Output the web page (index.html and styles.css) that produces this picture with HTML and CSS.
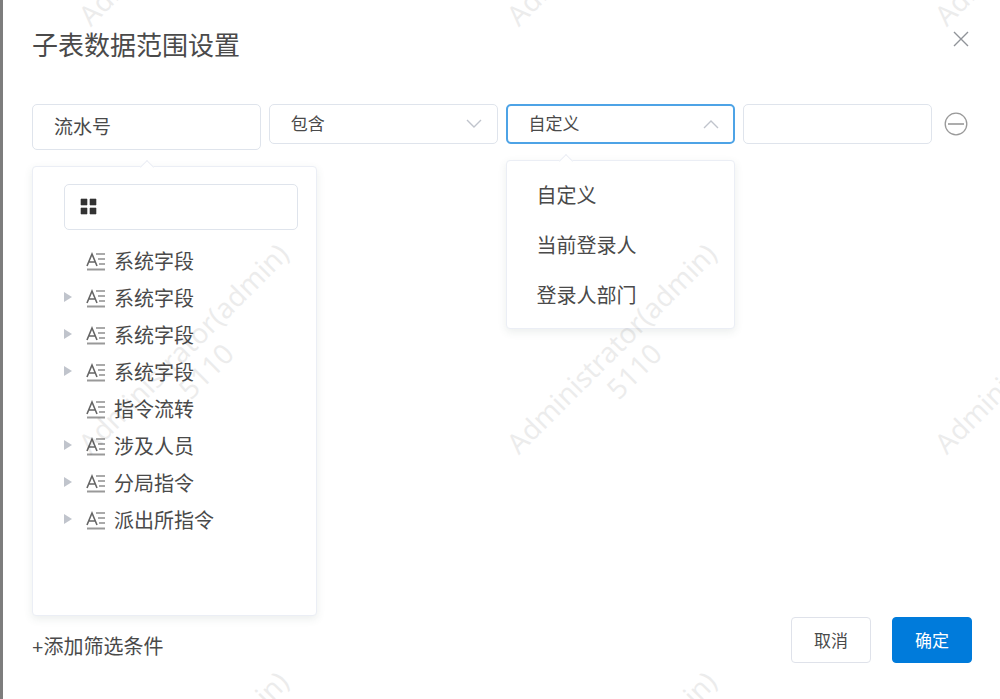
FILE: index.html
```html
<!DOCTYPE html>
<html lang="zh-CN">
<head>
<meta charset="utf-8">
<meta name="viewport" content="width=device-width, initial-scale=1">
<title>子表数据范围设置</title>
<link rel="stylesheet" href="styles.css">
</head>
<body>
<svg class="symbols" aria-hidden="true">
  <symbol id="field-icon" viewBox="0 0 20 20">
    <path d="M1 15 L6 3 L11 15 M3 11 H9" fill="none" stroke="#666" stroke-width="1.6"/>
    <path d="M10 3 H19 M12 8 H19 M13 13 H19" stroke="#aaa" stroke-width="2"/>
    <path d="M1 18.500 H19" stroke="#999" stroke-width="2"/>
  </symbol>
  <symbol id="caret-icon" viewBox="0 0 8 12"><path d="M0 0 L8 5 L0 10 Z" fill="#c0c4cc"/></symbol>
</svg>
<main class="dialog" role="dialog" aria-labelledby="dialog-title">
  <header class="dialog-header">
    <h1 class="dialog-title" id="dialog-title">子表数据范围设置</h1>
    <button class="icon-button" type="button" aria-label="关闭">
      <svg width="24" height="24" viewBox="0 0 24 24"><path d="M6 6 L20 20 M20 6 L6 20" stroke="#909399" stroke-width="1.4"/></svg>
    </button>
  </header>

  <div class="filter-row">
    <div class="field">
      <input class="control control-tall" type="text" value="流水号" aria-label="字段">
      <div class="popover tree-panel">
        <div class="search">
          <svg class="search-icon" width="16" height="16" viewBox="0 0 16 16" aria-hidden="true"><path d="M0 0h6v6H0zM9 0h6v6H9zM0 9h6v6H0zM9 9h6v6H9z" fill="#333" stroke="#333" stroke-width="0.6"/></svg>
          <input class="search-input" type="text" aria-label="搜索字段">
        </div>
        <ul class="tree">
          <li class="tree-item"><span class="caret"></span><svg class="tree-icon"><use href="#field-icon"/></svg><span>系统字段</span></li>
          <li class="tree-item"><button class="caret" type="button" aria-label="展开"><svg class="caret-icon"><use href="#caret-icon"/></svg></button><svg class="tree-icon"><use href="#field-icon"/></svg><span>系统字段</span></li>
          <li class="tree-item"><button class="caret" type="button" aria-label="展开"><svg class="caret-icon"><use href="#caret-icon"/></svg></button><svg class="tree-icon"><use href="#field-icon"/></svg><span>系统字段</span></li>
          <li class="tree-item"><button class="caret" type="button" aria-label="展开"><svg class="caret-icon"><use href="#caret-icon"/></svg></button><svg class="tree-icon"><use href="#field-icon"/></svg><span>系统字段</span></li>
          <li class="tree-item"><span class="caret"></span><svg class="tree-icon"><use href="#field-icon"/></svg><span>指令流转</span></li>
          <li class="tree-item"><button class="caret" type="button" aria-label="展开"><svg class="caret-icon"><use href="#caret-icon"/></svg></button><svg class="tree-icon"><use href="#field-icon"/></svg><span>涉及人员</span></li>
          <li class="tree-item"><button class="caret" type="button" aria-label="展开"><svg class="caret-icon"><use href="#caret-icon"/></svg></button><svg class="tree-icon"><use href="#field-icon"/></svg><span>分局指令</span></li>
          <li class="tree-item"><button class="caret" type="button" aria-label="展开"><svg class="caret-icon"><use href="#caret-icon"/></svg></button><svg class="tree-icon"><use href="#field-icon"/></svg><span>派出所指令</span></li>
        </ul>
      </div>
    </div>
    <div class="field">
      <select class="control" aria-label="条件"><option>包含</option></select>
      <svg class="chevron" width="16" height="10" viewBox="0 0 16 10" aria-hidden="true"><path d="M1 1 L8 8 L15 1" fill="none" stroke="#c0c4cc" stroke-width="1.4"/></svg>
    </div>
    <div class="field">
      <select class="control control-active" aria-label="取值方式"><option>自定义</option></select>
      <svg class="chevron" width="16" height="10" viewBox="0 0 16 10" aria-hidden="true"><path d="M1 9 L8 2 L15 9" fill="none" stroke="#c0c4cc" stroke-width="1.4"/></svg>
      <ul class="popover menu">
        <li><button class="menu-item" type="button">自定义</button></li>
        <li><button class="menu-item" type="button">当前登录人</button></li>
        <li><button class="menu-item" type="button">登录人部门</button></li>
      </ul>
    </div>
    <input class="control" type="text" aria-label="值">
    <button class="icon-button remove" type="button" aria-label="删除条件">
      <svg width="24" height="24" viewBox="0 0 24 24"><circle cx="12" cy="12" r="10.800" fill="none" stroke="#999" stroke-width="1.3"/><path d="M4 12 H20" stroke="#999" stroke-width="1.600"/></svg>
    </button>
  </div>

  <footer class="dialog-footer">
    <button class="add-button" type="button">+添加筛选条件</button>
    <div class="actions">
      <button class="button" type="button">取消</button>
      <button class="button button-primary" type="button">确定</button>
    </div>
  </footer>
</main>
<svg class="watermark" aria-hidden="true">
  <g id="mark-column">
    <g transform="translate(185 -78) rotate(-45)"><text y="8">Administrator(admin)</text><text y="40">5110</text></g>
    <g transform="translate(185 350) rotate(-45)"><text y="8">Administrator(admin)</text><text y="40">5110</text></g>
    <g transform="translate(185 778) rotate(-45)"><text y="8">Administrator(admin)</text><text y="40">5110</text></g>
  </g>
  <use href="#mark-column" x="428"/>
  <use href="#mark-column" x="856"/>
</svg>
</body>
</html>
```

FILE: styles.css
```css
* {
  box-sizing: border-box;
}

body {
  margin: 0;
  background: #fff;
  color: #4a4a4a;
  font-family: "Noto Sans", "Noto Sans CJK SC", sans-serif;
  font-size: 20px;
  font-weight: 400;
}

button,
input,
select {
  font: inherit;
  color: inherit;
}

button {
  padding: 0;
  border: 0;
  background: none;
  cursor: pointer;
}

ul {
  margin: 0;
  padding: 0;
  list-style: none;
}

svg {
  display: block;
}

.symbols {
  display: none;
}

.dialog {
  display: flex;
  flex-direction: column;
  min-height: 100vh;
  padding: 26px 28px 36px 29px;
  border-left: 3px solid #7d7d7d;
}

.dialog-header {
  display: flex;
  justify-content: space-between;
  align-items: flex-start;
  margin-bottom: 40px;
}

.dialog-title {
  margin: 0;
  font-size: 26px;
  font-weight: 400;
  line-height: 38px;
}

.icon-button {
  width: 24px;
  height: 24px;
}

.filter-row {
  display: grid;
  grid-template-columns: 229fr 230fr 229fr 189fr 32px;
  gap: 8px;
  align-items: start;
}

.remove {
  margin: 8px 0 0 4px;
}

.field {
  position: relative;
}

.control {
  display: block;
  width: 100%;
  height: 40px;
  padding: 0 21px 2px;
  border: 1px solid #dfe4ec;
  border-radius: 5px;
  outline: 0;
  appearance: none;
  background: #fff;
  font-size: 17px;
}

.control-tall {
  height: 46px;
  font-size: 19px;
}

.control-active {
  border: 2px solid #4da3e6;
  padding: 0 20px 2px;
}

.chevron {
  position: absolute;
  top: 15px;
  right: 16px;
  pointer-events: none;
}

.popover {
  position: absolute;
  top: 100%;
  left: 0;
  border: 1px solid #ebeef5;
  border-radius: 4px;
  background: #fff;
  box-shadow: 0 3px 9px rgba(60, 90, 80, 0.1);
}

.popover::before {
  content: "";
  position: absolute;
  top: -5px;
  left: 54px;
  width: 9px;
  height: 9px;
  border: solid #ebeef5;
  border-width: 1px 0 0 1px;
  background: #fff;
  transform: rotate(45deg);
}

.tree-panel {
  width: 285px;
  min-height: 450px;
  margin-top: 16px;
  padding: 17px 18px 17px 31px;
}

.tree-panel::before {
  left: 109px;
}

.search {
  display: flex;
  align-items: center;
  gap: 12px;
  height: 46px;
  margin-bottom: 12px;
  padding: 0 16px;
  border: 1px solid #dfe4ec;
  border-radius: 5px;
}

.search-icon {
  overflow: visible;
}

.search-input {
  flex: 1;
  min-width: 0;
  border: 0;
  outline: 0;
  background: none;
}

.tree-item {
  display: flex;
  align-items: center;
  height: 37px;
}

.caret {
  width: 22px;
  height: 16px;
}

.caret-icon {
  width: 8px;
  height: 12px;
}

.tree-icon {
  width: 20px;
  height: 20px;
  margin-right: 8px;
}

.menu {
  width: 100%;
  margin-top: 16px;
  padding: 8px 0 9px;
}

.menu-item {
  width: 100%;
  height: 50px;
  padding: 0 29px;
  text-align: left;
}

.dialog-footer {
  display: flex;
  justify-content: space-between;
  align-items: flex-end;
  margin-top: auto;
}

.add-button {
  line-height: 32px;
}

.actions {
  display: flex;
  gap: 21px;
}

.button {
  width: 80px;
  height: 46px;
  padding-bottom: 2px;
  border: 1px solid #dfe2ea;
  border-radius: 4px;
  background: #fff;
  font-size: 17px;
}

.button-primary {
  border-color: #007bdb;
  background: #007bdb;
  color: #fff;
}

.watermark {
  position: absolute;
  inset: 0;
  width: 100%;
  height: 100%;
  pointer-events: none;
  fill: #000;
  opacity: 0.07;
  font-family: "Noto Sans", sans-serif;
  font-size: 28px;
  text-anchor: middle;
}
```
